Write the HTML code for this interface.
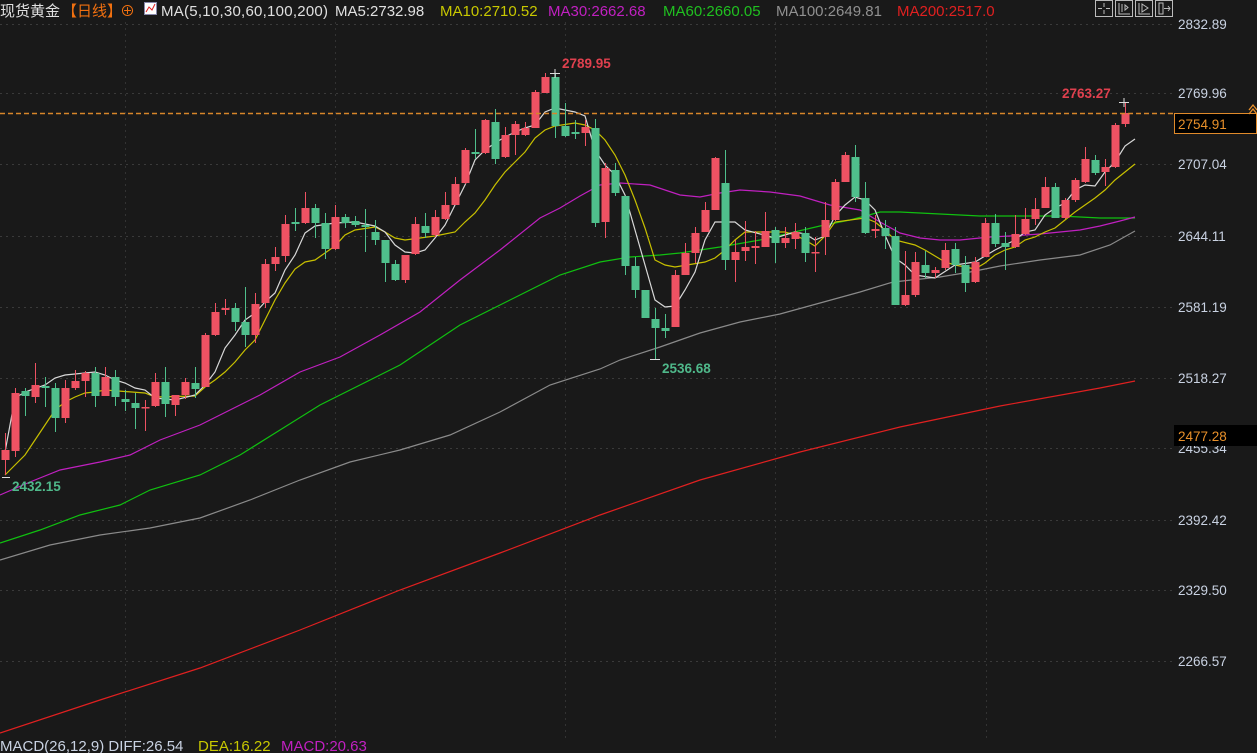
<!DOCTYPE html>
<html><head><meta charset="utf-8"><style>
html,body{margin:0;padding:0;background:#191919;}
body{width:1257px;height:753px;overflow:hidden;position:relative;font-family:"Liberation Sans","Noto Sans CJK SC",sans-serif;}
svg{position:absolute;left:0;top:0;}
.t{font-family:"Liberation Sans","Noto Sans CJK SC",sans-serif;font-size:13.5px;}
.h{font-family:"Liberation Sans","Noto Sans CJK SC",sans-serif;font-size:15px;}
</style></head><body>
<svg id="s" width="1257" height="753" xmlns="http://www.w3.org/2000/svg">
<g id="grid"></g>
<g id="ma"></g>
<g id="cd"></g>
<line x1="0" y1="113.5" x2="1174" y2="113.5" stroke="#d8862a" stroke-width="1.4" stroke-dasharray="5,3"/>
<g class="t" fill="#c9d2e2">
<text x="1178" y="29">2832.89</text>
<text x="1178" y="98">2769.96</text>
<text x="1178" y="169">2707.04</text>
<text x="1178" y="241">2644.11</text>
<text x="1178" y="312">2581.19</text>
<text x="1178" y="383">2518.27</text>
<text x="1178" y="453">2455.34</text>
<text x="1178" y="525">2392.42</text>
<text x="1178" y="595">2329.50</text>
<text x="1178" y="666">2266.57</text>
</g>
<rect x="1174.5" y="113.5" width="82" height="20" fill="#000" stroke="#e08a2a"/>
<text class="t" x="1178" y="129" fill="#e8902a">2754.91</text>
<path d="M1249 110 l4 -5 l4 5 M1249 114 l4 -5 l4 5" stroke="#e8902a" fill="none" stroke-width="1.3"/>
<rect x="1174" y="425" width="83" height="21" fill="#000"/>
<text class="t" x="1178" y="441" fill="#e8902a">2477.28</text>
<g class="t" font-weight="bold">
<text x="562" y="68" fill="#e0404e">2789.95</text>
<text x="1062" y="98" fill="#e0404e">2763.27</text>
<text x="662" y="373" fill="#4fb88a">2536.68</text>
<text x="12" y="491" fill="#4fb88a">2432.15</text>
</g>
<g stroke="#ddd" stroke-width="1">
<path d="M550 73.5h10M555 69v9"/><path d="M1119 102.5h10M1124 98v9"/><path d="M650 359.5h10"/><path d="M2 477.5h8"/>
</g>
<g fill="none" stroke="#bbb" stroke-width="1">
<rect x="1095.5" y="0.5" width="17" height="16"/><rect x="1115.5" y="0.5" width="17" height="16"/><rect x="1135.5" y="0.5" width="17" height="16"/><rect x="1155.5" y="0.5" width="17" height="16"/>
<path d="M1104 3v4M1104 10v4M1098 8.5h4M1106 8.5h4"/>
<path d="M1119 3v11h11M1122 4v8M1125 5v5l3-2.5z"/>
<path d="M1139 3v11h11M1142 4v8l6-4z"/>
<path d="M1159 3h4v11h-4zM1164 8.5h6M1168 6l2 2.5l-2 2.5"/>
</g>
<g class="h">
<text x="0" y="16" fill="#e0e0e0">现货黄金</text>
<text x="62" y="16" fill="#f07010">【日线】</text>
<text x="120" y="16" fill="#f07010">⊕</text>
<rect x="144.5" y="2.5" width="12" height="12" fill="#fff" stroke="#88a"/>
<path d="M146 12l3-5l3 3l3-6" stroke="#e02020" fill="none"/>
<text x="161" y="16" fill="#e0e0e0" textLength="167">MA(5,10,30,60,100,200)</text>
<text x="335" y="16" fill="#e0e0e0">MA5:2732.98</text>
<text x="440" y="16" fill="#c8c800">MA10:2710.52</text>
<text x="548" y="16" fill="#c020c0">MA30:2662.68</text>
<text x="663" y="16" fill="#20c020">MA60:2660.05</text>
<text x="776" y="16" fill="#909090">MA100:2649.81</text>
<text x="897" y="16" fill="#e02020">MA200:2517.0</text>
<text x="0" y="751" fill="#c9d2e2">MACD(26,12,9) DIFF:26.54</text>
<text x="198" y="751" fill="#c8c800">DEA:16.22</text>
<text x="281" y="751" fill="#c020c0">MACD:20.63</text>
</g>
</svg>
<script>
var NS="http://www.w3.org/2000/svg";
function el(p,t,a){var e=document.createElementNS(NS,t);for(var k in a)e.setAttribute(k,a[k]);p.appendChild(e);return e;}
var g=document.getElementById('grid');
[24,93,164,236,307,378,448,520,590,661].forEach(function(y){el(g,'line',{x1:0,x2:1174,y1:y+.5,y2:y+.5,stroke:'#3a3a3a','stroke-dasharray':'2,4'});});
[125,335,565,775,986].forEach(function(x){el(g,'line',{x1:x+.5,x2:x+.5,y1:22,y2:740,stroke:'#333','stroke-dasharray':'2,4'});});
var C=[[450,460,433,475,1],[393,451,388,457,1],[391,396,388,416,0],[385,397,363,403,1],[386,388,377,407,0],[388,418,383,432,0],[388,418,380,423,1],[381,388,370,390,1],[373,381,371,397,1],[373,396,367,407,0],
[377,396,367,396,1],[377,397,370,406,0],[399,402,390,411,0],[403,408,393,429,0],[407,408,400,431,1],[382,406,373,407,1],[382,404,367,417,0],[395,405,395,416,1],[382,395,378,399,1],[383,389,367,398,0],
[335,387,333,387,1],[312,335,303,336,1],[308,310,299,315,1],[308,322,303,331,0],[322,335,287,347,0],[304,335,293,343,1],[264,303,259,308,1],[257,264,247,271,1],[224,256,215,262,1],[222,224,208,231,0],
[208,223,192,224,1],[208,223,204,238,0],[223,249,213,259,0],[217,249,205,250,1],[217,223,214,228,0],[221,225,216,227,0],[225,227,209,252,0],[232,240,220,245,0],[240,263,240,282,0],[264,280,260,281,0],
[255,280,255,283,1],[224,254,217,255,1],[226,233,213,238,0],[217,235,210,237,1],[205,219,192,220,1],[184,205,177,205,1],[150,183,148,184,1],[152,154,129,159,0],[120,153,119,154,1],[122,159,109,164,0],
[135,157,127,158,1],[124,135,121,155,1],[128,135,122,136,1],[92,128,90,128,1],[77,93,73,93,1],[77,126,73,138,0],[126,136,103,137,0],[132,134,120,139,0],[127,133,120,146,1],[128,223,119,227,0],
[168,222,163,238,1],[170,193,163,196,0],[196,266,196,275,0],[266,290,257,298,0],[290,318,290,318,0],[319,328,308,359,0],[328,331,314,338,0],[275,327,270,327,1],[253,275,243,275,1],[233,253,227,263,1],
[210,232,202,232,1],[158,210,157,210,1],[183,260,150,270,0],[252,260,240,282,1],[247,251,221,261,1],[246,248,231,264,1],[231,247,212,247,1],[230,243,227,263,0],[238,243,227,248,1],[232,239,223,249,1],
[233,253,227,262,0],[252,253,237,272,1],[220,237,202,255,1],[182,220,179,221,1],[155,182,152,182,1],[157,197,145,202,0],[198,233,182,234,0],[229,231,215,238,1],[228,236,220,249,0],[236,305,227,305,0],
[295,305,251,306,1],[262,295,252,297,1],[265,273,251,278,0],[270,273,267,278,1],[250,268,243,270,1],[249,265,243,273,0],[265,283,256,292,0],[262,282,257,283,1],[223,257,218,257,1],[223,244,214,247,0],
[243,247,232,270,0],[234,247,215,248,1],[219,234,208,235,1],[209,219,198,225,1],[187,208,177,208,1],[187,218,183,218,0],[200,218,198,219,1],[180,200,178,202,1],[159,182,147,183,1],[160,173,155,175,0],
[167,172,159,186,1],[125,167,123,168,1],[113,124,102,127,1]];
var cd=document.getElementById('cd');
C.forEach(function(c,i){var x=5+10*i,col=c[4]?'#ee5263':'#4fbf8c';
el(cd,'line',{x1:x+.5,x2:x+.5,y1:c[2],y2:c[3],stroke:col,'stroke-width':1});
el(cd,'rect',{x:x-3.5,y:c[0],width:8,height:Math.max(1.5,c[1]-c[0]),fill:col});});
var ma=document.getElementById('ma');
function pl(pts,col){el(ma,'polyline',{points:pts,fill:'none',stroke:col,'stroke-width':1.2});}
pl("0,733 100,700 200,668 300,630 400,590 500,553 600,515 700,480 800,452 900,427 1000,406 1100,388 1135,381","#e02020");
pl("0,560 50,545 100,535 150,528 200,518 250,500 300,480 350,462 400,450 450,435 500,412 550,385 600,369 620,360 660,347 700,333 740,322 780,314 820,303 860,292 893,282 940,277 970,272 1000,266 1040,260 1080,255 1110,245 1135,231","#8a8a8a");
pl("0,543 40,530 80,515 120,505 150,490 200,475 240,455 280,430 320,405 360,385 400,365 430,345 460,325 500,305 530,290 560,275 600,262 630,257 660,255 680,253 720,247 760,240 790,233 820,226 850,220 880,212 900,212 940,214 980,216 1020,216 1060,216 1100,218 1135,218","#10c010");
pl("0,495 30,482 60,470 100,462 130,455 160,440 200,425 240,405 260,395 300,372 340,357 380,335 420,312 460,280 500,250 540,218 560,208 580,196 600,185 620,183 650,185 680,195 700,197 720,193 740,190 770,192 800,196 830,205 860,210 880,222 900,233 920,238 940,240 960,240 990,237 1010,236 1040,234 1060,232 1080,230 1100,226 1120,221 1135,217","#c020c0");
pl("5,475 15,465 25,455 35,440 45,425 55,410 65,402 75,397 85,393 95,392 105,390 145,393 155,397 195,396 205,387 215,380 225,372 235,362 245,350 255,340 265,320 275,300 285,283 295,269 305,262 315,260 325,253 335,246 345,235 355,230 375,227 385,232 395,238 405,240 435,236 455,232 465,222 475,213 485,200 495,185 505,172 515,162 525,152 535,138 545,130 555,126 575,123 585,125 595,130 605,140 615,155 625,175 635,200 645,228 655,260 665,265 675,267 705,262 715,258 725,250 735,240 745,232 785,232 795,235 805,240 815,246 825,236 835,222 865,218 875,222 885,230 895,240 915,245 925,250 935,256 945,262 955,265 975,269 985,263 995,255 1005,250 1015,247 1025,240 1035,237 1045,232 1055,228 1065,220 1075,212 1085,205 1095,198 1105,190 1115,180 1125,172 1135,164","#c8c000");
pl("5,452 15,398 25,392 45,385 55,378 65,375 95,372 105,375 115,380 125,383 135,388 145,390 155,398 175,400 195,395 205,385 215,372 225,348 235,335 245,320 255,313 265,302 275,293 285,270 295,255 305,233 315,226 335,223 355,222 375,226 385,232 395,245 405,252 415,253 425,250 435,238 445,225 455,205 465,185 475,160 485,150 495,143 505,137 515,132 525,128 535,125 545,112 555,108 575,112 585,116 595,150 605,165 615,175 625,195 635,230 645,265 655,300 665,307 675,306 685,290 695,272 705,240 715,222 735,222 745,230 775,238 795,232 805,234 815,240 825,236 835,216 845,205 855,197 865,200 875,210 885,235 895,258 905,265 915,275 935,278 955,265 975,262 995,250 1015,240 1025,232 1035,230 1045,215 1055,208 1065,203 1075,190 1085,185 1095,186 1105,172 1115,162 1125,146 1135,139","#d8d8d8");
</script>
</body></html>
